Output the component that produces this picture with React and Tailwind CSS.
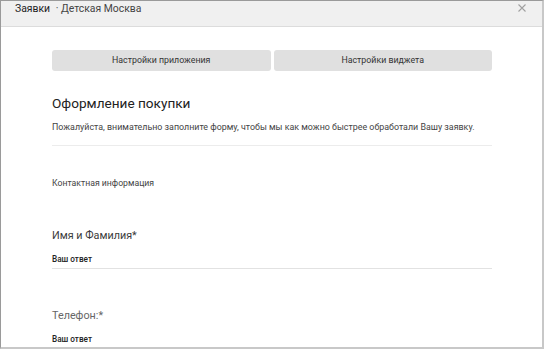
import React from 'react';

const Field = ({ label, labelClass }) => (
  <div>
    <div className={`text-[10.8px] leading-[16px] ${labelClass}`}>{label}</div>
    <div className="mt-[9px] pb-[3px] border-b border-[#e2e2e2]">
      <div className="text-[8.2px] leading-[12px] font-medium text-[#222]">Ваш ответ</div>
    </div>
  </div>
);

const App = () => {
  return (
    <div
      className="w-[544px] h-[349px] overflow-hidden bg-white border-t border-l border-[#9a9a9a] border-r-2 border-b-2 border-r-[#c8c8c8] border-b-[#c8c8c8]"
      style={{ fontFamily: 'Roboto, "Noto Sans", sans-serif' }}
    >
      <header className="h-[26px] bg-[#f0f0f0] border-b border-[#dcdcdc] flex items-center justify-between pl-[14px] pr-[16px]">
        <div className="text-[10.4px] text-[#222] leading-none -mt-[9px]">
          Заявки <span className="ml-[3px] text-[#444]">· Детская Москва</span>
        </div>
        <svg width="8" height="8" viewBox="0 0 8 8" className="-mt-[11px]">
          <path d="M0.5 0.5 L7.5 7.5 M7.5 0.5 L0.5 7.5" stroke="#a0a0a0" strokeWidth="1.1" />
        </svg>
      </header>

      <main className="pl-[51px] pr-[50px]">
        <div className="mt-[23px] flex gap-[3px]">
          <button className="flex-1 h-[21px] rounded-[3px] bg-[#e0e0e0] text-[8.8px] text-[#333]">
            Настройки приложения
          </button>
          <button className="flex-1 h-[21px] rounded-[3px] bg-[#e0e0e0] text-[8.8px] text-[#333]">
            Настройки виджета
          </button>
        </div>

        <h1 className="mt-[23px] text-[13.6px] leading-[18px] text-[#212121]">Оформление покупки</h1>
        <p className="mt-[8px] text-[8.9px] leading-[14px] text-[#444] whitespace-nowrap">
          Пожалуйста, внимательно заполните форму, чтобы мы как можно быстрее обработали Вашу заявку.
        </p>
        <div className="mt-[11px] border-b border-[#ececec]" />

        <div className="mt-[31px] text-[8.7px] leading-[12px] text-[#444]">Контактная информация</div>

        <div className="mt-[39px]">
          <Field label="Имя и Фамилия*" labelClass="text-[#3a3a3a]" />
        </div>
        <div className="mt-[39px]">
          <Field label="Телефон:*" labelClass="text-[#666]" />
        </div>
      </main>
    </div>
  );
};

export default App;
